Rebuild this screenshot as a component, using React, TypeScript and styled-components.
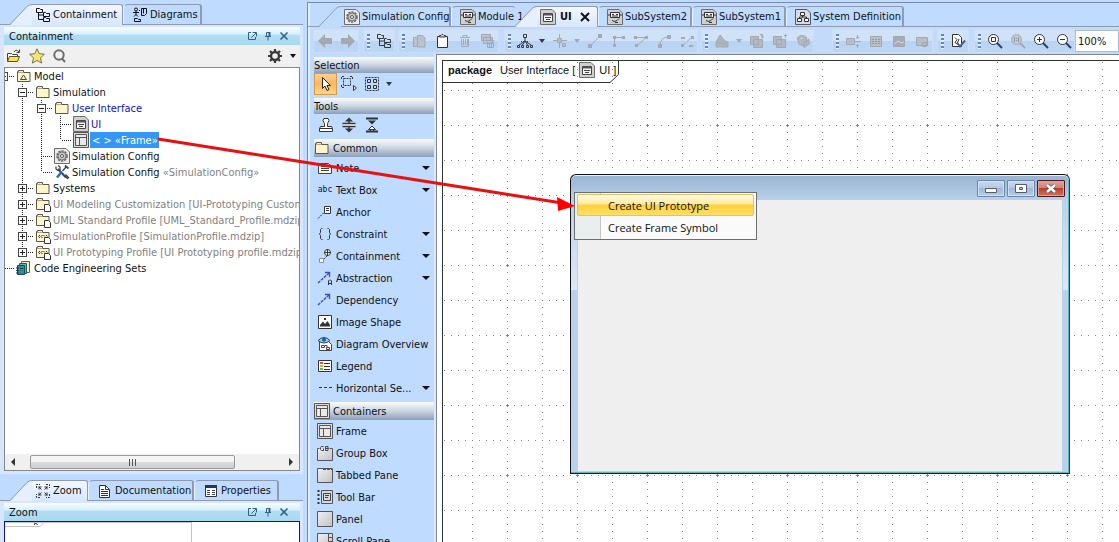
import React from "react";
import styled, { createGlobalStyle, css } from "styled-components";

const c = {
  page: "#bfdbff",
  dock: "#d7e6fc",
  line: "#8e9bb0",
  ink: "#333840",
  off: "#a4a9b0",
};

const Global = createGlobalStyle`
  * { box-sizing: border-box; }
  body {
    margin: 0;
    background: ${c.page};
    color: #111;
    font: 11px/16px "DejaVu Sans Condensed", Roboto, sans-serif;
    overflow: hidden;
  }
  button, input { font: inherit; color: inherit; }
  button { border: 0; padding: 0; background: none; text-align: left; }
  svg { display: block; flex: none; }
`;

/* ---------- icons ---------- */

const folder = (
  <>
    <path d="M1.5 13.5v-10h1v-1h5v2h6.5v9z" fill="#fff5cc" stroke="#5a574c" />
    <path d="M2 4.500h5.500" stroke="#b9a77c" />
  </>
);

const docFrame = (
  <path d="M.5.500h11.500l3.500 3.500v11.500H.500z" fill="#cfcfcf" stroke="#6d6d6d" />
);

const glyphs: Record<string, React.ReactNode> = {
  tree: (
    <g fill="none" stroke="currentColor">
      <path d="M1.500 1.500h3l1 1h2v3h-6z M8.500 5.500h2l1 1h3v3h-6z M8.500 10.500h2l1 1h3v3h-6z" />
      <path d="M3.500 6v6.500h5M3.500 8h5" />
    </g>
  ),
  diagrams: (
    <g fill="none" stroke="currentColor">
      <circle cx="4" cy="2.500" r="1.500" />
      <path d="M1 5.500h6M4 4v4M2 9.500l2-2 2 2M9.500 1.500h5v5l-2 2h-3zM11.500 1.500v5M2.500 11.500h3l1 1h2v2h-6z" />
      <path d="M7 3.500h2.500" strokeDasharray="1 1" />
    </g>
  ),
  open: (
    <>
      <path d="M1.500 13.500v-8h4l1 1h5v2" fill="#fff" stroke="#444" />
      <path d="M1.500 13.500l2-5h10l-2 5z" fill="#fbe34d" stroke="#54502a" />
      <path d="M8 4q2-3.500 5 0M13.500 1.500v3h-3" fill="none" stroke="#444" />
    </>
  ),
  star: (
    <path d="M8 .8l2.200 4.900 5.200.5-3.900 3.600 1.100 5.300L8 12.400l-4.600 2.700 1.100-5.300L.6 6.200l5.200-.5z" fill="#f5e66d" stroke="#75754f" />
  ),
  search: (
    <g fill="none" stroke="#6e6e6e" strokeWidth="2">
      <circle cx="7" cy="7" r="4.700" />
      <path d="M10 10.500l3 3.500" />
    </g>
  ),
  gear: (
    <g stroke="#3a3a3a" fill="none">
      <circle cx="8" cy="8" r="4" strokeWidth="2.400" />
      <path d="M8 1v3M8 12v3M1 8h3M12 8h3M3 3l2 2M11 11l2 2M13 3l-2 2M5 11l-2 2" strokeWidth="2.200" />
    </g>
  ),
  folder,
  model: (
    <>
      {folder}
      <path d="M4.500 11.500l3-4.500 3 4.500z" fill="none" stroke="#444" />
    </>
  ),
  folderDoc: (
    <>
      {folder}
      <path d="M9.500 8.500h4l2 2v5h-6z" fill="#fff" stroke="#333" />
    </>
  ),
  profile: (
    <>
      {folder}
      <path d="M5 7L3.500 8.500 5 10M7.500 7L6 8.500 7.500 10M8.500 7L10 8.500M11 7l1.500 1.500" fill="none" stroke="#333" />
      <path d="M9.500 9.500h4l2 2v4h-6z" fill="#fff" stroke="#333" />
    </>
  ),
  ui: (
    <>
      {docFrame}
      <path d="M3.500 4.500h9v8h-9z" fill="#f4f4f4" stroke="#444" />
      <path d="M4 5.500h8" stroke="#555" strokeWidth="2" />
      <path d="M5 8.500h6M6 10.500h4" stroke="#444" />
    </>
  ),
  frame: (
    <>
      <path d="M.5.500h15v15H.500z" fill="#dcdcdc" stroke="#555" />
      <path d="M2.500 2.500h11v11h-11z" fill="#e9e9ea" stroke="#555" />
      <path d="M3 5.500h10M6.500 6v7" stroke="#555" />
    </>
  ),
  config: (
    <>
      <path d="M.5.500h11.500l3.500 3.500v11.500H.500z" fill="#ececec" stroke="#6d6d6d" />
      <circle cx="8" cy="8" r="5" fill="#ccc" stroke="#666" strokeWidth="1.600" strokeDasharray="2.200 1" />
      <circle cx="8" cy="8" r="4" fill="#c9c9c9" stroke="#777" />
      <circle cx="8" cy="8" r="1.500" fill="#fff" stroke="#555" />
    </>
  ),
  tools: (
    <g fill="none">
      <path d="M4 5l8 8.500" stroke="#394553" strokeWidth="2" />
      <path d="M2 2.500v2.500l2 1.500 2-1V3L4 1.500M10.500 11.500l3 3 1-1-3-3" stroke="#394553" strokeWidth="1.300" />
      <path d="M12.500 2.500L8.500 7" stroke="#394553" strokeWidth="1.400" />
      <path d="M7.500 8L3 13.500" stroke="#2c72b5" strokeWidth="2.600" />
      <path d="M11 1.500l3.500 3" stroke="#394553" strokeWidth="1.800" />
    </g>
  ),
  books: (
    <>
      <path d="M5.500 1.500h8v11h-8z" fill="#f3efb8" stroke="#56624f" />
      <path d="M3.500 3.500h7v10h-7z" fill="#5eb5b4" stroke="#1c5b63" />
      <path d="M1.500 5.500h7v9h-7z" fill="#2f8e94" stroke="#174b55" />
      <path d="M0 8h3M0 10.500h3M0 13h3M4 8.500h3" stroke="#103c45" />
    </>
  ),
  module: (
    <>
      {docFrame}
      <path d="M3.500 3.500h9v5h-9z" fill="#f2f2f2" stroke="#333" />
      <path d="M5 5.500h2M9 5.500h2M5 7h6" stroke="#333" />
      <path d="M1 6h2M13 6h2M5 11.500q2 2 5 0l2-2M8 13.500h3" stroke="#333" fill="none" />
    </>
  ),
  blocks: (
    <>
      <path d="M.5.500h11.500l3.500 3.500v11.500H.500z" fill="#d6dbe3" stroke="#55585e" />
      <path d="M5.500 3.500h4v3h-4zM2.500 9.500h4v3h-4zM9.500 9.500h4v3h-4z" fill="#fff" stroke="#333" />
      <path d="M7.500 7v1.500M4.500 9.500v-1.500h7v1.500" fill="none" stroke="#333" />
    </>
  ),
  left: <path d="M1 8l7-7v4h7v6H8v4z" fill="currentColor" />,
  right: <path d="M15 8L8 1v4H1v6h7v4z" fill="currentColor" />,
  copy: (
    <path d="M2.500 4.500h4v9h-4zM6.500 2.500h5l2.500 2.500v9H6.500z" fill="#b9c2ce" stroke="currentColor" />
  ),
  clipboard: (
    <>
      <path d="M3.500 3.500h10v11h-10z" fill="#fff" stroke="#333" />
      <path d="M5.500 4V2.500h1.500l1-1h1l1 1h1.500V4z" fill="#ddd" stroke="#333" />
    </>
  ),
  trash: (
    <path d="M3 4.500h10M6 4V2.500h4V4M4.500 6v7.500h7V6M6.500 6v6M8.500 6v6M10.500 6v6" fill="none" stroke="currentColor" />
  ),
  trashes: (
    <>
      <path d="M1.500 1.500h9v6h-9zM3.500 4.500h9v6h-9z" fill="#b9c2ce" stroke="currentColor" />
      <path d="M6.500 7.500h8M7.500 9v5.500h6V9M9.500 9v5M11.500 9v5" fill="none" stroke="currentColor" />
    </>
  ),
  hierarchy: (
    <g fill="none" stroke="currentColor">
      <path d="M6.500 1.500h3v3h-3zM.5 12.500h2v2h-2zM4.500 12.500h2v2h-2zM9.500 12.500h2v2h-2zM13.500 12.500h2v2h-2z" />
      <path d="M8 4.500v4M8 8L2 12M8 8L5.500 12M8 8l2.500 4M8 8l6 4" />
      <path d="M4 8.500h8" strokeDasharray="1 1" />
    </g>
  ),
  align: (
    <>
      <path d="M5.500 5.500h4v4h-4zM10.500 10.500h3v3h-3z" fill="#b9bfc8" stroke="currentColor" />
      <path d="M1 7.500h4M7.500 1v4M10 7.500h5M7.500 10v5" stroke="currentColor" />
    </>
  ),
  seg: (
    <>
      <path d="M3 13L13 3" stroke="currentColor" />
      <path d="M1 11h4v4H1zM11 1h4v4h-4z" fill="currentColor" />
    </>
  ),
  elbow: (
    <>
      <path d="M4.500 13V4.500H14" fill="none" stroke="currentColor" />
      <path d="M3 3h3v3H3zM12 3h3v3h-3zM3 11h3v3H3z" fill="currentColor" />
    </>
  ),
  zig: (
    <>
      <path d="M3 4.500h10L4 13" fill="none" stroke="currentColor" />
      <path d="M1 3h3v3H1zM12 3h3v3h-3zM2 11h3v3H2z" fill="currentColor" />
    </>
  ),
  curve: (
    <>
      <path d="M4 13Q4 4 13 4" fill="none" stroke="currentColor" />
      <path d="M2 11h4v4H2zM11 2h4v4h-4z" fill="currentColor" />
    </>
  ),
  split: (
    <>
      <path d="M3 13L13 4" stroke="currentColor" strokeDasharray="5 2" />
      <path d="M2 4h4v2H2zM12 3h3v3h-3zM2 11h3v3H2zM10 12h4v2h-4z" fill="currentColor" />
    </>
  ),
  shape: (
    <path d="M2 14V9l4-7 5 6 3 1v5zM4 10h8" fill="#aeb4bb" stroke="currentColor" />
  ),
  front: (
    <path d="M1.500 3.500h8v8h-8zM4.500 6.500h9v8h-9zM11 1.500h2.500V5M12 3.500l1.500 1.500L15 3.500" fill="#b3b9c0" stroke="currentColor" />
  ),
  back: (
    <path d="M1.500 3.500h8v8h-8zM4.500 6.500h9v8h-9zM13.500 5V1.500M12 3l1.500-1.500L15 3" fill="#b3b9c0" stroke="currentColor" />
  ),
  bucket: (
    <path d="M2.500 4.500q5-4 9 0v6q-4 4-8 0zM2.500 5q4 3 9 0M8 10l6-4v5l-5 3.500z" fill="#b3b9c0" stroke="currentColor" />
  ),
  fit: (
    <>
      <path d="M1.500 5.500h8v6h-8z" fill="#b9bfc8" stroke="currentColor" />
      <path d="M10 8.500h6M12.500 2v4M12.500 11v4M11 4.500h3M11 12.500h3" stroke="currentColor" />
    </>
  ),
  note2: (
    <>
      <path d="M2.500 3.500h11v10h-11z" fill="#b9bfc8" stroke="currentColor" />
      <path d="M4 6.500h8M4 8.500h8M4 10.500h8" stroke="#8f98a4" strokeDasharray="2 1" />
    </>
  ),
  photo: (
    <>
      <path d="M2.500 3.500h11v10h-11z" fill="#a5abb4" stroke="currentColor" />
      <path d="M3 11l4-3 3 2 3-1" stroke="#d4d9e0" fill="none" />
    </>
  ),
  card: (
    <path d="M2.500 4.500h11v8h-11zM8.500 9.500h4v4h-4z" fill="#b9bfc8" stroke="currentColor" />
  ),
  validate: (
    <>
      <path d="M2.500 1.500h6l3 3v9h-9z" fill="#fff" stroke="#333" />
      <path d="M5 4.500l2 2-2 3 3 2M9 6l-2 5" fill="none" stroke="#333" />
      <path d="M7 9.500l3 4 5-6" fill="none" stroke="#4a6287" strokeWidth="2" />
    </>
  ),
  zoomFit: (
    <>
      <circle cx="6.500" cy="6.500" r="5" fill="#fff" stroke="#333" />
      <path d="M4.500 4.500h4v4h-4z" fill="none" stroke="#333" />
      <path d="M10 10l5 5" stroke="#27406f" strokeWidth="2" />
    </>
  ),
  zoomOne: (
    <>
      <circle cx="6.500" cy="6.500" r="5" fill="#c3c9d1" stroke="currentColor" />
      <path d="M4.500 4v5M8.500 4v5M6.500 5v1M6.500 7v1" stroke="#8c95a1" />
      <path d="M10 10l5 5" stroke="currentColor" strokeWidth="2" />
    </>
  ),
  zoomIn: (
    <>
      <circle cx="6.500" cy="6.500" r="5" fill="#fff" stroke="#333" />
      <path d="M4 6.500h5M6.500 4v5" stroke="#333" />
      <path d="M10 10l5 5" stroke="#27406f" strokeWidth="2" />
    </>
  ),
  zoomOut: (
    <>
      <circle cx="6.500" cy="6.500" r="5" fill="#fff" stroke="#333" />
      <path d="M4 6.500h5" stroke="#333" />
      <path d="M10 10l5 5" stroke="#27406f" strokeWidth="2" />
    </>
  ),
  pointer: (
    <path d="M4.500 1.500v11l2.500-2.500 2 4.500 2-1-2-4h3.500z" fill="#fff" stroke="#222" />
  ),
  lasso: (
    <>
      <path d="M2.500 2.500h7v7h-7z" fill="none" stroke="#333" strokeDasharray="2 1" />
      <path d="M1 .5h2M9 .5h2M.5 1v2M11.500 1v2M.5 9v2M1 11.500h2" stroke="#333" />
      <path d="M12.500 9.500v5l3-2.500z" fill="#fff" stroke="#333" />
    </>
  ),
  group: (
    <g fill="none" stroke="#333">
      <path d="M1.500 1.500h13v13h-13z" strokeDasharray="2 1" />
      <path d="M3.500 3.500h3v3h-3zM9.500 3.500h3v3h-3zM3.500 9.500h3v3h-3zM9.500 9.500h3v3h-3z" />
    </g>
  ),
  stamp: (
    <path d="M6 1.500h4l1 2-1.500 3v3h4l1 2h-13l1-2h4v-3L5 3.500zM1.500 11.500v3h13v-3" fill="#fff" stroke="#333" />
  ),
  spread: (
    <>
      <path d="M2 7h12v2H2z" fill="#fff" />
      <path d="M1.500 6.500h13M1.500 9.500h13M8 3v4M8 9v4" stroke="#333" strokeWidth="1.400" fill="none" />
      <path d="M4 11.500h8l-4 4zM4 4.500l4-4 4 4z" fill="#333" />
    </>
  ),
  squeeze: (
    <>
      <path d="M2 1.500h12M2 14.500h12" stroke="#333" strokeWidth="2" />
      <path d="M4 3.500h8l-4 4z" fill="#333" />
      <path d="M4.500 12.500l3.500-3.500 3.500 3.500zM6.500 12v2h3v-2" fill="#fff" stroke="#333" />
    </>
  ),
  note: (
    <>
      <path d="M1.500 3.500h10l3 3v7h-13z" fill="#fff7d5" stroke="#444" />
      <path d="M4 6.500h6M4 8.500h8M4 10.500h8" stroke="#444" />
    </>
  ),
  anchor: (
    <>
      <path d="M7.500 2.500h6v7h-6z" fill="#fff" stroke="#333" />
      <path d="M9 4.500h3M9 6.500h3" stroke="#333" />
      <path d="M1 14.500l6-6" stroke="#333" strokeDasharray="2 1" />
    </>
  ),
  braces: (
    <path d="M5.500 2.500h-1l-1 1v3l-1 1.500 1 1.500v3l1 1h1M10.500 2.500h1l1 1v3l1 1.500-1 1.500v3l-1 1h-1" fill="none" stroke="#333" />
  ),
  contain: (
    <>
      <circle cx="10.500" cy="4.500" r="3" fill="#fff" stroke="#333" />
      <path d="M7 4.500h7M10.500 1v7" stroke="#333" />
      <path d="M10 8l-4 4" stroke="#333" strokeDasharray="2 1" />
      <path d="M2.500 10.500h4v4h-4z" fill="#fff" stroke="#8a93a0" />
    </>
  ),
  abstraction: (
    <>
      <path d="M1 13L12 3" stroke="#3c4fa3" strokeWidth="1.400" strokeDasharray="3 1" />
      <path d="M8 2.500h4.500v4.500" fill="none" stroke="#3c4fa3" strokeWidth="1.400" />
      <path d="M11.500 15v-4l1-1h1l1 1v4M12 13.500h2.500" fill="none" stroke="#333" />
    </>
  ),
  dependency: (
    <g fill="none" stroke="#3c4fa3" strokeWidth="1.400">
      <path d="M1 13L12 3" strokeDasharray="3 1" />
      <path d="M8 2.500h4.500v4.500" />
    </g>
  ),
  image: (
    <>
      <path d="M1.500 1.500h13v13h-13z" fill="#fff" stroke="#333" />
      <path d="M3 12.500V11l3-3.500 2 2.500 2.500-3 2.500 4v1.500zM7 4h2v2H7z" fill="#333" />
    </>
  ),
  overview: (
    <>
      <path d="M2.500 5.500h9l3 3v6h-12z" fill="#fff" stroke="#444" />
      <path d="M1 4.500q6-6 12 0-6 5-12 0z" fill="#9cd0ef" stroke="#264a66" />
      <circle cx="7" cy="3.800" r="2" fill="#1d5f94" />
      <path d="M4.500 9.500h3v2h-3zM9.500 11.500h3v2h-3zM8 9.500h2v2" fill="none" stroke="#444" />
    </>
  ),
  legend: (
    <>
      <path d="M1.500 2.500h13v11h-13z" fill="#fff" stroke="#333" />
      <path d="M3 4h3v2H3z" fill="#e2542f" />
      <path d="M3 7h3v2H3z" fill="#e9a92c" />
      <path d="M3 10h3v2H3z" fill="#77b443" />
      <path d="M7 5.500h6M7 8.500h6M7 11.500h6" stroke="#333" />
    </>
  ),
  dashes: <path d="M2 7.500h13" stroke="#333" strokeDasharray="3 2" />,
  groupBox: (
    <>
      <path d="M.5 3.500h2M12.500 3.500h3v12H.500v-12" fill="url(#pane)" stroke="#555" />
      <path d="M6.500 1.500h-2l-1 1v2l1 1h2v-2M8.500 5.500v-4h2.500v4zM8.500 3.500h3" fill="none" stroke="#444" />
    </>
  ),
  tabbed: (
    <>
      <path d="M.5 15.500V1.500h15v14z" fill="url(#pane)" stroke="#555" />
      <path d="M6 2.500h9M6.500 1v2M11.500 1v2" stroke="#555" strokeDasharray="3 1" />
    </>
  ),
  toolBar: (
    <>
      <path d="M4.500 1.500h11v13h-11z" fill="#d5d8dc" stroke="#555" />
      <path d="M1.500 1v14" stroke="#333" strokeWidth="2" strokeDasharray="2 2" />
      <path d="M6.500 4.500h7v7h-7zM8 6.500h4M8 8.500h3" fill="none" stroke="#444" />
    </>
  ),
  panel: <path d="M.5.500h15v15H.500z" fill="url(#pane)" stroke="#555" />,
  scrollPane: (
    <>
      <path d="M.5.500h15v15H.500z" fill="url(#pane)" stroke="#555" />
      <path d="M11.500 1v14M12 4.500h3M12 8.500h3M12 12.500h3" stroke="#555" />
    </>
  ),
  zoomTab: (
    <g fill="none" stroke="#333">
      <path d="M1.500 5V1.500H5M11 1.500h3.500V5M14.500 11v3.500H11M5 14.500H1.500V11" strokeDasharray="2 1" />
      <path d="M3.500 3.500l3 3M12.500 3.500l-3 3M3.500 12.500l3-3M12.500 12.500l-3-3M4 6.500V4h2.500M9.500 4H12v2.500M12 9.500V12H9.500M6.500 12H4V9.500" />
    </g>
  ),
  doc: (
    <>
      <path d="M2.500 2.500h6l4 4v8h-10z" fill="#fff" stroke="#333" />
      <path d="M8.500 2.500v4h4M4 6.500h3M4 8.500h7M4 10.500h7M4 12.500h7" fill="none" stroke="#333" />
    </>
  ),
  props: (
    <>
      <path d="M2.500 2.500h11v11h-11z" fill="#fff" stroke="#333" />
      <path d="M2 3.500h12" stroke="#1f3765" strokeWidth="3" />
      <path d="M4 7.500h4M9 7.500h4M4 9.500h4M9 9.500h4M4 11.500h4M9 11.500h4" stroke="#444" strokeDasharray="3 1" />
    </>
  ),
  pop: (
    <g fill="none" stroke="#2f6286">
      <path d="M7 4.500H4.500v7h7V9M8.500 4.500h4v4M12 5L7.500 9.500" />
    </g>
  ),
  pin: (
    <g fill="none" stroke="#2f6286">
      <path d="M6.500 4.500h3v4h-3zM5 8.500h6M8 9v3.500" />
      <path d="M9.500 4v5" strokeWidth="2" />
    </g>
  ),
  close: <path d="M4.500 4.500l7 7M11.500 4.500l-7 7" stroke="#2f6286" strokeWidth="1.600" />,
};

const Glyph = ({ name }: { name: string }) => (
  <svg width="16" height="16" viewBox="0 0 16 16" aria-hidden="true">
    {glyphs[name]}
  </svg>
);

const Caret = ({ size = 8 }: { size?: number }) => (
  <svg width={size} height="4" viewBox="0 0 8 4" preserveAspectRatio="none" aria-hidden="true">
    <path d="M0 0h8L4 4z" fill="currentColor" />
  </svg>
);

/* ---------- shell ---------- */

const Shell = styled.div`
  display: grid;
  grid-template-columns: 303px minmax(0, 1fr);
  column-gap: 4px;
  height: 100vh;
`;

const SideColumn = styled.div`
  display: grid;
  grid-template-columns: minmax(0, 1fr);
  grid-template-rows: minmax(0, 1fr) 62px;
  row-gap: 6px;
  padding-top: 4px;
  min-height: 0;
`;

const Dock = styled.section`
  display: flex;
  flex-direction: column;
  min-width: 0;
  min-height: 0;
`;

const TabStrip = styled.div<{ $indent: number }>`
  display: flex;
  height: 21px;
  padding-left: ${(p) => p.$indent}px;
  flex: none;
  box-shadow: inset 0 -1px ${c.line};
`;

const TabButton = styled.button<{ $active?: boolean; $slant?: boolean; $width: number; $tucked?: boolean }>`
  position: relative;
  display: flex;
  align-items: center;
  gap: 2px;
  flex: none;
  width: ${(p) => p.$width}px;
  height: ${(p) => (p.$active ? 21 : 20)}px;
  padding-left: ${(p) => (p.$slant ? 3 : 8)}px;
  margin-left: ${(p) => (p.$slant ? 22 : 0)}px;
  border-top: 1px solid ${c.line};
  border-right: ${(p) => (p.$tucked ? 0 : p.$active ? 1 : 2)}px solid ${c.line};
  border-left: ${(p) => (p.$slant ? 0 : 1)}px solid #eaf2fd;
  border-radius: ${(p) => (p.$slant ? "0 3px 0 0" : "5px 3px 0 0")};
  background: ${(p) => (p.$active ? `linear-gradient(#f3f8ff, ${c.dock})` : c.page)};
  white-space: nowrap;
  z-index: ${(p) => (p.$active ? 1 : 0)};
`;

const Slope = styled.svg`
  position: absolute;
  right: 100%;
  top: -1px;
`;

interface TabProps {
  icon: string;
  label: string;
  width: number;
  active?: boolean;
  slant?: boolean;
  tucked?: boolean;
  closable?: boolean;
}

const TabLabel = styled.span<{ $bold?: boolean }>`
  margin-left: ${(p) => (p.$bold ? 2 : 0)}px;
  font-weight: ${(p) => (p.$bold ? 700 : 400)};
`;

const CloseMark = styled.svg`
  margin-left: 6px;
`;

const Tab = ({ icon, label, width, active, slant, tucked, closable }: TabProps) => (
  <TabButton role="tab" aria-selected={!!active} $width={width} $active={active} $slant={!!slant} $tucked={tucked}>
    {slant && (
      <Slope width="22" height="21" viewBox="0 0 22 21" aria-hidden="true">
        <path d="M0 21l18-19 4-2v21z" fill={active ? "#e6effc" : c.page} />
        <path d="M0 20.500L17 2.500q2-2 5-2" fill="none" stroke={c.line} />
      </Slope>
    )}
    <Glyph name={icon} />
    <TabLabel $bold={closable}>{label}</TabLabel>
    {closable && (
      <CloseMark width="10" height="10" viewBox="0 0 10 10" aria-hidden="true">
        <path d="M1 1l8 8M9 1L1 9" stroke="#111" strokeWidth="2" />
      </CloseMark>
    )}
  </TabButton>
);

const DockBody = styled.div<{ $open?: boolean }>`
  display: flex;
  flex-direction: column;
  flex: 1;
  min-height: 0;
  padding: ${(p) => (p.$open ? "2px 3px 0 4px" : "2px 3px 3px 4px")};
  background: ${c.dock};
`;

const DockTitle = styled.header`
  display: flex;
  align-items: center;
  flex: none;
  height: 18px;
  padding: 0 8px 0 5px;
  background: linear-gradient(#fafdff 0%, #d6effb 40%, #b2def3 45%, #a8d8f0 100%);
`;

const Title = styled.h2`
  flex: 1;
  margin: 0;
  padding-top: 1px;
  font: inherit;
`;

const DockActions = () => (
  <>
    <button aria-label="Float"><Glyph name="pop" /></button>
    <button aria-label="Pin"><Glyph name="pin" /></button>
    <button aria-label="Close"><Glyph name="close" /></button>
  </>
);

const DockTools = styled.div`
  display: flex;
  align-items: center;
  gap: 7px;
  flex: none;
  height: 22px;
  padding: 0 4px 0 2px;
  background: #f0f0f0;
`;

const Grow = styled.span`
  flex: 1;
`;

/* ---------- containment tree ---------- */

const TreeBox = styled.div`
  display: flex;
  flex-direction: column;
  flex: 1;
  min-height: 0;
  border: 1px solid #828790;
  background: #fff;
`;

const TreeList = styled.ul`
  flex: 1;
  min-height: 0;
  margin: 0;
  padding: 0;
  overflow: hidden;
  list-style: none;
`;

const TreeRow = styled.li`
  display: flex;
  height: 16px;
  margin-left: -8px;
  line-height: 18px;
  white-space: nowrap;
`;

const NodeText = styled.span<{ $tone?: string }>`
  margin-left: 1px;
  padding: 0 1px;
  ${(p) => p.$tone === "blue" && css`color: #1010c8;`}
  ${(p) => p.$tone === "dim" && css`color: #7f7f7f;`}
  ${(p) => p.$tone === "picked" && css`color: #fff; background: #3397f7; padding: 0 1px 0 2px;`}
`;

const Stereo = styled.span`
  color: #7f7f7f;
`;

/* One 19px column of the connector drawing:
   | passes through, t joins, l ends, h is a stub;
   + and - are toggles on a continuing branch, L and M are toggles on its last node */
const Link = ({ kind }: { kind: string }) => (
  <svg width="19" height="16" viewBox="0 0 19 16" aria-hidden="true" shapeRendering="crispEdges">
    <g stroke="#222" fill="none" strokeDasharray="1 1">
      {"|t+-".includes(kind) && <path d="M6.500 0v16" />}
      {"lL".includes(kind) && <path d="M6.500 0v8" />}
      {kind !== "|" && kind !== " " && <path d="M8 8.500h10" />}
    </g>
    {"+-LM".includes(kind) && (
      <>
        <path d="M2.500 4.500h8v8h-8z" fill="#fff" stroke="#444" />
        <path d={kind === "+" || kind === "L" ? "M4 8.500h5M6.500 6v5" : "M4 8.500h5"} stroke="#222" />
      </>
    )}
  </svg>
);

const nodes = [
  { links: "M", icon: "model", text: "Model" },
  { links: " -", icon: "folder", text: "Simulation" },
  { links: " |-", icon: "folder", text: "User Interface", tone: "blue" },
  { links: " ||t", icon: "ui", text: "UI", tone: "blue" },
  { links: " ||l", icon: "frame", text: "< > «Frame»", tone: "picked" },
  { links: " |t", icon: "config", text: "Simulation Config" },
  { links: " |l", icon: "tools", text: "Simulation Config", stereo: "«SimulationConfig»" },
  { links: " +", icon: "folder", text: "Systems" },
  { links: " +", icon: "folderDoc", text: "UI Modeling Customization [UI-Prototyping Customization.mdzip]", tone: "dim" },
  { links: " +", icon: "folderDoc", text: "UML Standard Profile [UML_Standard_Profile.mdzip]", tone: "dim" },
  { links: " +", icon: "profile", text: "SimulationProfile [SimulationProfile.mdzip]", tone: "dim" },
  { links: " L", icon: "profile", text: "UI Prototyping Profile [UI Prototyping profile.mdzip]", tone: "dim" },
  { links: "h", icon: "books", text: "Code Engineering Sets" },
];

const ScrollBar = styled.div`
  display: flex;
  align-items: center;
  flex: none;
  height: 16px;
  background: #f0f0f0;
`;

const ScrollArrow = styled.button`
  display: grid;
  place-items: center;
  flex: none;
  width: 16px;
  height: 16px;
`;

const ScrollTrack = styled.div`
  display: flex;
  flex: 1;
  padding-left: 9px;
`;

const ScrollThumb = styled.div`
  display: grid;
  place-items: center;
  width: 81%;
  height: 14px;
  border: 1px solid #9a9a9a;
  border-radius: 2px;
  background: linear-gradient(#f5f5f5 45%, #dcdcde 50%, #cfcfd2);
`;

const ZoomView = styled.div`
  flex: 1;
  min-height: 0;
  border: 1px solid #10109c;
  border-bottom: 0;
  background: #fff;
  overflow: hidden;
`;

/* ---------- editor ---------- */

const Editor = styled.main`
  display: flex;
  flex-direction: column;
  min-width: 0;
  margin-top: 2px;
  border-top: 1px solid #7b8ba6;
  border-left: 1px solid #7b8ba6;
  padding-top: 3px;
  box-shadow: inset 2px 0 #e3eefc;
  overflow: hidden;
`;

const ToolRow = styled.div`
  display: flex;
  flex: none;
  margin-left: 3px;
  padding: 2px 0 1px 2px;
  background: #c3dafa;
`;

const ToolGroup = styled.div<{ $before?: number }>`
  display: flex;
  align-items: center;
  flex: none;
  height: 24px;
  margin-left: ${(p) => p.$before ?? 0}px;
  background: linear-gradient(#cfe2f8 0 50%, #b9d3f3 51%, #bcd6f6);
  box-shadow: inset 0 0 0 1px #cadef7;
`;

const Grip = styled.span`
  width: 3px;
  height: 15px;
  margin: 0 2px 0 4px;
  background: repeating-linear-gradient(#5f87bd 0 2px, #e6f0fc 2px 4px);
`;

const ToolButton = styled.button<{ $wide?: number }>`
  display: grid;
  place-items: center;
  width: ${(p) => p.$wide ?? 23}px;
  height: 22px;
  color: ${c.ink};
  &:disabled { color: ${c.off}; }
`;

const ZoomInput = styled.input`
  flex: 1;
  min-width: 0;
  height: 22px;
  margin-top: 1px;
  padding: 0 2px;
  border: 1px solid #a9bdd8;
  background: #fff;
`;

const Workspace = styled.div`
  display: grid;
  grid-template-columns: 122px minmax(0, 1fr);
  column-gap: 2px;
  flex: 1;
  min-height: 0;
  margin-left: 4px;
`;

const Palette = styled.aside`
  display: flex;
  flex-direction: column;
  min-height: 0;
  padding: 3px 0 0 2px;
  background: ${c.page};
  box-shadow: 2px 0 #dce9fa;
  overflow: hidden;
`;

const PaletteHead = styled.h3<{ $icon?: boolean }>`
  display: flex;
  align-items: center;
  gap: 3px;
  flex: none;
  height: ${(p) => (p.$icon ? 18 : 16)}px;
  margin: 0;
  font: inherit;
  background: linear-gradient(#fbfcfd, #cbd5e1 50%, #8c9eb8);
`;

const PaletteLabel = styled.span`
  padding-top: 2px;
`;

const PaletteTools = styled.div`
  display: flex;
  align-items: center;
  flex: none;
  height: 22px;
  margin-bottom: 3px;
`;

const PaletteTool = styled.button<{ $on?: boolean }>`
  display: grid;
  place-items: center;
  width: 23px;
  height: 22px;
  ${(p) =>
    p.$on &&
    css`
      border: 1px solid #d29a4a;
      background: linear-gradient(#fdd092, #fcb65a 50%, #ffd98a);
    `}
`;

const PaletteList = styled.div`
  flex: none;
  margin-bottom: 3px;
`;

const PaletteItem = styled.button`
  display: flex;
  align-items: center;
  gap: 3px;
  width: 100%;
  height: 22px;
  padding: 0 4px 0 3px;
  white-space: nowrap;
`;

const Abc = styled.span`
  width: 16px;
  font: 8px/16px "DejaVu Sans Mono", monospace;
  text-align: center;
`;

type Item = [icon: string, label: string, menu?: boolean];

const common: Item[] = [
  ["note", "Note", true],
  ["abc", "Text Box", true],
  ["anchor", "Anchor"],
  ["braces", "Constraint", true],
  ["contain", "Containment", true],
  ["abstraction", "Abstraction", true],
  ["dependency", "Dependency"],
  ["image", "Image Shape"],
  ["overview", "Diagram Overview"],
  ["legend", "Legend"],
  ["dashes", "Horizontal Se...", true],
];

const containers: Item[] = [
  ["frame", "Frame"],
  ["groupBox", "Group Box"],
  ["tabbed", "Tabbed Pane"],
  ["toolBar", "Tool Bar"],
  ["panel", "Panel"],
  ["scrollPane", "Scroll Pane"],
];

const Items = ({ items }: { items: Item[] }) => (
  <PaletteList>
    {items.map(([icon, label, menu]) => (
      <PaletteItem key={label}>
        {icon === "abc" ? <Abc aria-hidden="true">abc</Abc> : <Glyph name={icon} />}
        <PaletteLabel>{label}</PaletteLabel>
        {menu && <><Grow /><Caret /></>}
      </PaletteItem>
    ))}
  </PaletteList>
);

/* ---------- diagram ---------- */

const Diagram = styled.div`
  position: relative;
  min-width: 0;
  border-top: 1px solid #7f8792;
  border-left: 1px solid #7f8792;
  background: #fff;
  overflow: hidden;
`;

const Grid = styled.svg`
  position: absolute;
  inset: 0;
`;

const PackageFrame = styled.div`
  position: absolute;
  inset: 5px -1px -1px 5px;
  border: 1px solid #333;
`;

const PackageName = styled.div`
  position: relative;
  display: flex;
  align-items: center;
  gap: 4px;
  width: 176px;
  height: 21px;
  padding: 0 0 4px 5px;
  font-family: "Liberation Sans", Arial, sans-serif;
  white-space: nowrap;
`;

const PackageEdge = styled.svg`
  position: absolute;
  left: 0;
  top: 0;
`;

const PackageKind = styled.strong`
  margin-right: 4px;
`;

const Mock = styled.div`
  position: absolute;
  left: 133px;
  top: 119px;
  display: flex;
  flex-direction: column;
  width: 500px;
  height: 300px;
  border: 1px solid #111;
  border-right-color: #1b4650;
  border-radius: 6px 6px 0 0;
  padding: 0 7px 2px;
  background:
    linear-gradient(#bbd2ea, #dce8f6) 0 25px / 6px 90px no-repeat,
    linear-gradient(#bbd2ea, #dce8f6) 100% 25px / 6px 90px no-repeat,
    linear-gradient(#98b3d1, #b9d1ea 25px);
  box-shadow: inset 0 1px #e8f1fa, inset -1px -1px #62b4c4;
`;

const MockTitle = styled.div`
  display: flex;
  justify-content: flex-end;
  gap: 2px;
  height: 25px;
  padding-top: 5px;
  margin-right: -3px;
`;

const MockButton = styled.button<{ $close?: boolean }>`
  display: grid;
  place-items: center;
  width: 28px;
  height: 17px;
  border: 1px solid ${(p) => (p.$close ? "#4b1a20" : "#6c87a8")};
  border-radius: 1px;
  background: ${(p) =>
    p.$close
      ? "linear-gradient(#e2a196, #d08377 45%, #bb3f2b 50%, #d0735c)"
      : "linear-gradient(#c6d8ec, #b5cbe3 45%, #9db9d8 50%, #b6cee8)"};
  box-shadow: inset 0 0 0 1px ${(p) => (p.$close ? "#e3a093" : "#d2e1f1")};
`;

const MockBody = styled.div`
  flex: 1;
  background: #efefef;
`;

const Menu = styled.div`
  position: absolute;
  left: 137px;
  top: 137px;
  width: 183px;
  padding: 1px 2px;
  border: 1px solid #6e6e6e;
  background: linear-gradient(90deg, #e9eeee 25px, #c5c5c5 25px 26px, #fafafa 26px);
`;

const MenuItem = styled.button<{ $on?: boolean }>`
  display: block;
  width: 100%;
  height: 22px;
  padding: 2px 0 0 30px;
  border: 1px solid transparent;
  border-radius: 2px;
  font-family: "Open Sans", sans-serif;
  ${(p) =>
    p.$on &&
    css`
      border-color: #dcc272;
      background: linear-gradient(#fffbe0, #ffeaa0 45%, #ffd136 50%, #ffdf6a);
    `}
`;

const Arrow = styled.svg`
  position: fixed;
  left: 0;
  top: 0;
  z-index: 5;
  pointer-events: none;
`;

const tool = (icon: string, off = true) => (
  <ToolButton key={icon} disabled={off} aria-label={icon}><Glyph name={icon} /></ToolButton>
);

const dropTool = (off: boolean) => (
  <ToolButton $wide={12} disabled={off} aria-label="More"><Caret size={6} /></ToolButton>
);

export default function App() {
  return (
    <Shell>
      <Global />
      <SideColumn>
        <Dock>
          <TabStrip $indent={10} role="tablist">
            <Tab icon="tree" label="Containment" width={91} active slant />
            <Tab icon="diagrams" label="Diagrams" width={79} />
          </TabStrip>
          <DockBody>
            <DockTitle><Title>Containment</Title><DockActions /></DockTitle>
            <DockTools>
              <button aria-label="Open"><Glyph name="open" /></button>
              <button aria-label="Favorites"><Glyph name="star" /></button>
              <button aria-label="Search"><Glyph name="search" /></button>
              <Grow />
              <button aria-label="Options"><Glyph name="gear" /></button>
              <Caret size={6} />
            </DockTools>
            <TreeBox>
              <TreeList>
                {nodes.map((n, i) => (
                  <TreeRow key={i}>
                    {n.links.split("").map((k, j) => <Link key={j} kind={k} />)}
                    <Glyph name={n.icon} />
                    <NodeText $tone={n.tone}>
                      {n.text}
                      {n.stereo && <Stereo> {n.stereo}</Stereo>}
                    </NodeText>
                  </TreeRow>
                ))}
              </TreeList>
              <ScrollBar>
                <ScrollArrow aria-label="Scroll left">
                  <svg width="4" height="8" viewBox="0 0 4 8"><path d="M4 0v8L0 4z" fill="#333" /></svg>
                </ScrollArrow>
                <ScrollTrack>
                  <ScrollThumb>
                    <svg width="9" height="7" viewBox="0 0 9 7"><path d="M1.500 0v7M4.500 0v7M7.500 0v7" stroke="#555" /></svg>
                  </ScrollThumb>
                </ScrollTrack>
                <ScrollArrow aria-label="Scroll right">
                  <svg width="4" height="8" viewBox="0 0 4 8"><path d="M0 0v8l4-4z" fill="#333" /></svg>
                </ScrollArrow>
              </ScrollBar>
            </TreeBox>
          </DockBody>
        </Dock>
        <Dock>
          <TabStrip $indent={10} role="tablist">
            <Tab icon="zoomTab" label="Zoom" width={56} active slant />
            <Tab icon="doc" label="Documentation" width={106} />
            <Tab icon="props" label="Properties" width={85} />
          </TabStrip>
          <DockBody $open>
            <DockTitle><Title>Zoom</Title><DockActions /></DockTitle>
            <ZoomView>
              <svg width="200" height="20" viewBox="0 0 200 20" aria-hidden="true">
                <path d="M0 4.500h35l3-3V0M186.500 0v20M0 .5h186" fill="none" stroke="#c4c4c4" />
                <path d="M29.500 3V1.500h2l1 1.500" fill="none" stroke="#444" />
              </svg>
            </ZoomView>
          </DockBody>
        </Dock>
      </SideColumn>

      <Editor>
        <TabStrip $indent={11} role="tablist">
          <Tab icon="config" label="Simulation Config" width={110} slant />
          <Tab icon="module" label="Module 1" width={64} tucked />
          <Tab icon="ui" label="UI" width={61} active slant closable />
          <Tab icon="module" label="SubSystem2" width={94} />
          <Tab icon="module" label="SubSystem1" width={94} />
          <Tab icon="blocks" label="System Definition" width={118} />
        </TabStrip>
        <ToolRow role="toolbar">
          <ToolGroup>{tool("left")}{tool("right")}</ToolGroup>
          <ToolGroup $before={4}><Grip />{tool("tree", false)}</ToolGroup>
          <ToolGroup $before={3}><Grip />{tool("copy")}{tool("clipboard", false)}{tool("trash")}{tool("trashes")}</ToolGroup>
          <ToolGroup $before={5}>
            <Grip />{tool("hierarchy", false)}{dropTool(false)}{tool("align")}{dropTool(true)}
            {["seg", "elbow", "zig", "curve", "split"].map((n) => tool(n))}
          </ToolGroup>
          <ToolGroup $before={3}>
            <Grip />{tool("shape")}{dropTool(true)}{["front", "back", "bucket"].map((n) => tool(n))}
          </ToolGroup>
          <ToolGroup $before={18}><Grip />{["fit", "note2", "photo", "card"].map((n) => tool(n))}</ToolGroup>
          <ToolGroup $before={4}><Grip />{tool("validate", false)}</ToolGroup>
          <ToolGroup $before={5}>
            <Grip />{tool("zoomFit", false)}{tool("zoomOne")}{tool("zoomIn", false)}{tool("zoomOut", false)}
          </ToolGroup>
          <ZoomInput aria-label="Zoom level" defaultValue="100%" />
        </ToolRow>
        <Workspace>
          <Palette>
            <svg width="0" height="0" aria-hidden="true">
              <linearGradient id="pane" x1="0" y1="0" x2="1" y2="1">
                <stop stopColor="#f1f1f2" />
                <stop offset="1" stopColor="#bfc1c6" />
              </linearGradient>
            </svg>
            <PaletteHead><PaletteLabel>Selection</PaletteLabel></PaletteHead>
            <PaletteTools>
              <PaletteTool $on aria-label="Select"><Glyph name="pointer" /></PaletteTool>
              <PaletteTool aria-label="Select area"><Glyph name="lasso" /></PaletteTool>
              <PaletteTool aria-label="Select group"><Glyph name="group" /></PaletteTool>
              <ToolButton $wide={12} aria-label="More selection tools"><Caret size={6} /></ToolButton>
            </PaletteTools>
            <PaletteHead><PaletteLabel>Tools</PaletteLabel></PaletteHead>
            <PaletteTools>
              <PaletteTool aria-label="Sticky"><Glyph name="stamp" /></PaletteTool>
              <PaletteTool aria-label="Spread"><Glyph name="spread" /></PaletteTool>
              <PaletteTool aria-label="Squeeze"><Glyph name="squeeze" /></PaletteTool>
            </PaletteTools>
            <PaletteHead $icon><Glyph name="folder" /><PaletteLabel>Common</PaletteLabel></PaletteHead>
            <Items items={common} />
            <PaletteHead $icon><Glyph name="frame" /><PaletteLabel>Containers</PaletteLabel></PaletteHead>
            <Items items={containers} />
          </Palette>
          <Diagram>
            <Grid width="100%" height="100%" shapeRendering="crispEdges" aria-hidden="true">
              {/* dotted lines every 35px, with a cross on every second crossing */}
              <pattern id="grid" x="0" y="0" width="70" height="70" patternUnits="userSpaceOnUse">
                <path d="M0 35.500h70M0 .5h70M35.500 0v70M.5 0v70" stroke="#858585" strokeDasharray="1 6" />
                <path d="M-1 .5h3M69 .5h1M.5 0v2M.5 69v1" stroke="#858585" />
              </pattern>
              <rect x="6" y="6" width="100%" height="100%" fill="url(#grid)" />
            </Grid>
            <PackageFrame>
              <PackageName>
                <PackageEdge width="177" height="23" viewBox="0 0 177 23" aria-hidden="true">
                  <path d="M0 21.500h167l8.500-8V0" fill="none" stroke="#333" />
                </PackageEdge>
                <PackageKind>package</PackageKind>User Interface [<Glyph name="ui" />UI ]
              </PackageName>
            </PackageFrame>
            <Mock>
              <MockTitle>
                <MockButton aria-label="Minimize">
                  <svg width="12" height="8" viewBox="0 0 12 8"><path d="M.5 3.500h11v4H.500z" fill="#fff" stroke="#555c6b" /></svg>
                </MockButton>
                <MockButton aria-label="Maximize">
                  <svg width="12" height="9" viewBox="0 0 12 9">
                    <path d="M.5.500h11v8H.500z" fill="#fff" stroke="#555c6b" />
                    <path d="M4.500 3.500h3v2h-3z" fill="#a9c0da" stroke="#555c6b" />
                  </svg>
                </MockButton>
                <MockButton $close aria-label="Close window">
                  <svg width="12" height="9" viewBox="0 0 12 9">
                    <path d="M2 1l8 7M10 1L2 8" stroke="#5d5561" strokeWidth="4" />
                    <path d="M2 1l8 7M10 1L2 8" stroke="#fff" strokeWidth="2.400" />
                  </svg>
                </MockButton>
              </MockTitle>
              <MockBody />
            </Mock>
            <Menu role="menu">
              <MenuItem role="menuitem" $on>Create UI Prototype</MenuItem>
              <MenuItem role="menuitem">Create Frame Symbol</MenuItem>
            </Menu>
          </Diagram>
        </Workspace>
      </Editor>

      <Arrow width="600" height="230" viewBox="0 0 600 230" aria-hidden="true">
        <path d="M158 139L562 203" stroke="#e81010" strokeWidth="3" />
        <path d="M575 206l-18-9 1 14z" fill="#f00" />
      </Arrow>
    </Shell>
  );
}
